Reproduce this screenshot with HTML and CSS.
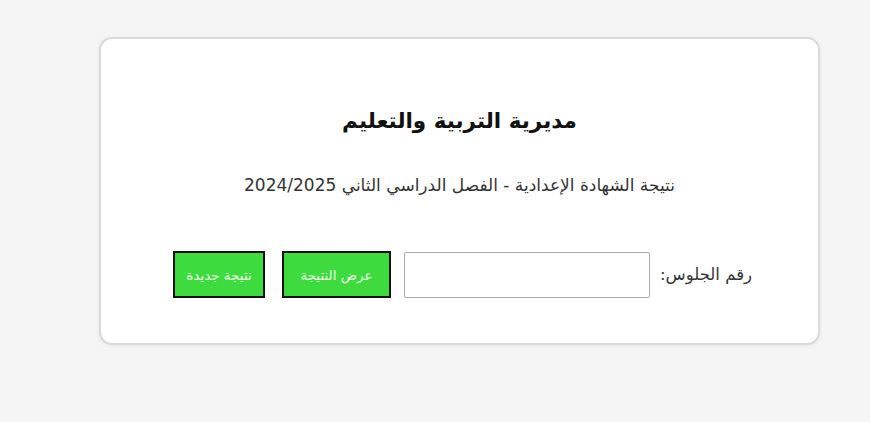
FILE: index.html
```html
<!DOCTYPE html>
<html lang="ar" dir="rtl">
<head>
<meta charset="utf-8">
<title>مديرية التربية والتعليم</title>
<link rel="stylesheet" href="styles.css">
</head>
<body>
<div class="page">
  <div class="card">
    <h1 class="title">مديرية التربية والتعليم</h1>
    <p class="subtitle">نتيجة الشهادة الإعدادية - الفصل الدراسي الثاني 2024/2025</p>
    <form class="form-row">
      <label class="label" for="seat">رقم الجلوس:</label>
      <input class="input" id="seat" type="text">
      <button class="btn" type="button">عرض النتيجة</button>
      <button class="btn" type="button">نتيجة جديدة</button>
    </form>
  </div>
</div>
</body>
</html>
```
FILE: styles.css
```css
html, body {
  margin: 0;
  padding: 0;
  background: #f5f5f5;
}
body {
  font-family: "DejaVu Sans", sans-serif;
  color: #222;
  width: 870px;
  height: 422px;
  overflow: hidden;
}
.page {
  padding-top: 37px;
  padding-right: 50px;
}
.card {
  box-sizing: border-box;
  width: 721px;
  height: 308px;
  background: #fff;
  border: 2px solid #dadada;
  border-radius: 13px;
  box-shadow: 0 1px 4px rgba(0,0,0,0.06);
  text-align: center;
  padding-top: 62px;
}
.title {
  margin: 0;
  font-size: 21.5px;
  font-weight: bold;
  color: #111;
  line-height: 40px;
}
.subtitle {
  margin: 32px 0 0;
  font-size: 17px;
  color: #333;
  line-height: 24px;
}
.form-row {
  margin-top: 54px;
  padding-left: 6px;
  display: flex;
  justify-content: center;
  align-items: center;
}
.label {
  font-size: 16.5px;
  color: #333;
  margin-left: 10px;
}
.input {
  box-sizing: border-box;
  width: 246px;
  height: 46px;
  border: 1px solid #aaa;
  border-radius: 2px;
  margin: 0 0 0 13px;
  font-size: 15px;
}
.btn {
  box-sizing: border-box;
  height: 47px;
  background: #3ddb3d;
  border: 2px solid #111;
  color: #eaffe6;
  font-family: "DejaVu Sans", sans-serif;
  font-size: 13.5px;
  padding: 0 6px;
  margin: 0 0 0 17px;
}
.btn:first-of-type {
  width: 109px;
}
.btn:last-of-type {
  width: 92px;
  margin-left: 0;
}
```
